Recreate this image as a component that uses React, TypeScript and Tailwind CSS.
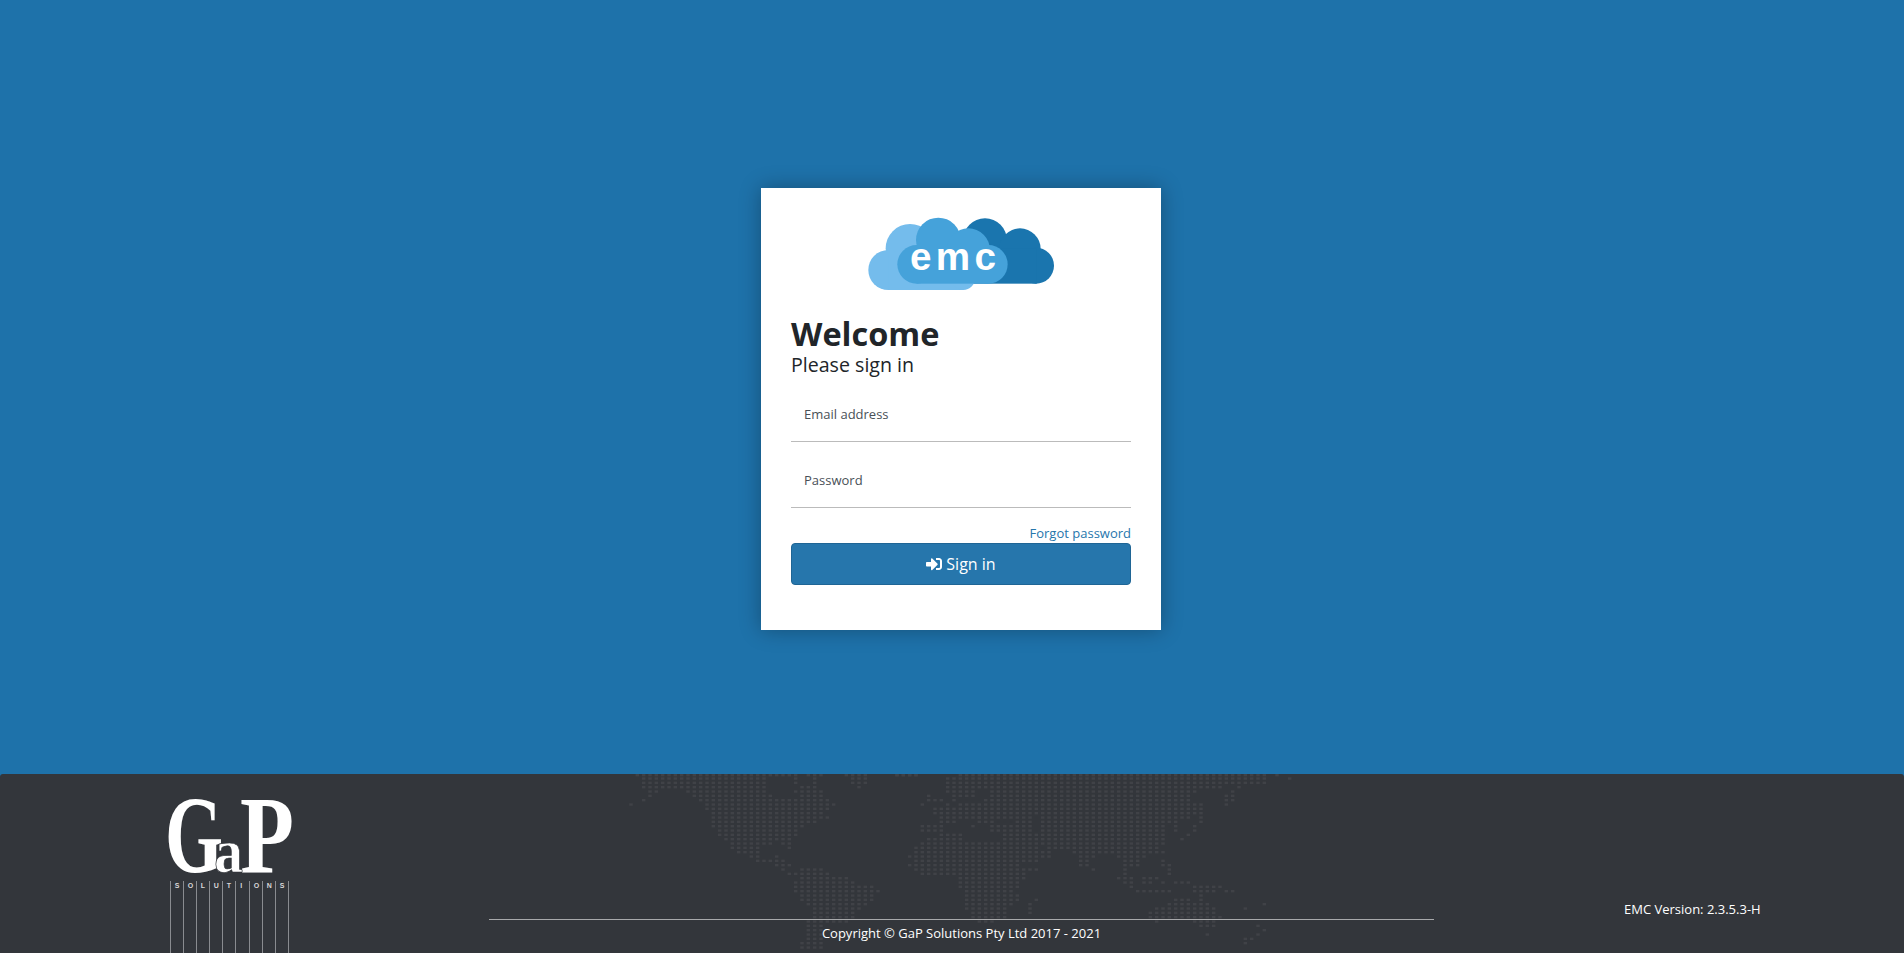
import React from "react";
import { FaSignInAlt } from "react-icons/fa";

type Row = [number, ...number[][]];
const left: Row[] = [
  [12,[50,470],[490,520],[570,610],[685,745],[840,880]],
  [25,[65,440],[530,530],[590,590],[700,730]],
  [38,[65,440],[530,530],[590,590],[700,730]],
  [51,[65,440],[545,575],[725,725]],
  [64,[90,110],[200,440],[530,610]],
  [77,[90,90],[220,460],[545,610]],
  [90,[70,70],[240,500],[530,630]],
  [103,[30,30],[260,500],[530,650]],
  [116,[260,630]],
  [129,[280,595]],
  [142,[280,630]],
  [155,[280,575]],
  [168,[280,555]],
  [181,[295,535]],
  [194,[295,535]],
  [207,[315,515]],
  [220,[335,460],[490,515]],
  [233,[335,335],[355,420],[510,510]],
  [246,[355,420]],
  [259,[395,420],[470,470]],
  [272,[415,480]],
  [285,[470,500]],
  [298,[495,495],[545,610]],
  [311,[510,630]],
  [324,[545,670]],
  [337,[530,690]],
  [350,[530,750]],
  [363,[530,765]],
  [376,[550,750]],
  [389,[550,750]],
  [402,[570,730]],
  [415,[585,710]],
  [428,[585,690]],
  [441,[585,690]],
  [454,[565,670]],
  [467,[565,600]],
  [480,[565,600]],
  [493,[565,600]],
  [506,[565,600]],
  [519,[550,595]],
  [532,[550,595]],
];
const right: Row[] = [
  [12,[0,45],[190,235],[265,315],[340,1100],[1135,1135]],
  [25,[150,215],[245,1095],[1160,1175]],
  [38,[150,215],[245,1085]],
  [51,[150,215],[245,965],[1020,1020]],
  [64,[150,215],[285,890],[995,995]],
  [77,[90,90],[170,215],[285,870],[980,1005]],
  [90,[90,120],[170,170],[250,870],[980,1005]],
  [103,[75,75],[150,150],[190,910],[980,980]],
  [116,[110,910]],
  [129,[110,910]],
  [142,[130,230],[245,315],[340,390],[420,870],[905,905]],
  [155,[130,155],[230,280],[360,390],[420,830],[905,905]],
  [168,[75,120],[210,210],[285,390],[420,780],[830,830],[885,885]],
  [181,[75,120],[285,390],[420,780],[825,825],[885,885]],
  [194,[130,175],[320,400],[420,780],[865,865]],
  [207,[90,190],[320,400],[420,780],[845,845]],
  [220,[70,300],[320,400],[420,795]],
  [233,[50,300],[320,400],[450,775]],
  [246,[50,300],[320,450],[515,640],[650,785]],
  [259,[35,335],[360,450],[535,580],[650,730]],
  [272,[50,335],[360,410],[535,560],[670,715],[785,785]],
  [285,[35,350],[535,560],[670,715],[785,810]],
  [298,[50,410],[575,575],[670,670],[805,805]],
  [311,[70,370],[670,670],[805,805]],
  [324,[185,370],[650,690],[730,770]],
  [337,[185,350],[670,690],[730,750],[785,785],[825,865]],
  [350,[185,350],[690,690],[880,965]],
  [363,[205,330],[710,810],[880,945],[980,1005]],
  [376,[205,350],[905,905]],
  [389,[205,350],[405,405],[825,870],[905,905]],
  [402,[205,330],[385,385],[805,925],[1095,1095]],
  [415,[205,310],[385,385],[765,945],[1040,1040]],
  [428,[225,310],[385,385],[745,945]],
  [441,[225,310],[745,965]],
  [454,[245,275],[765,765],[880,945]],
  [467,[900,945],[1075,1075]],
  [480,[1095,1095]],
  [493,[925,925],[1075,1075]],
  [506,[1040,1060]],
  [519,[1040,1040]],
];

const PITCH = 19 / 3;
const BASE = 650;

function dots(rows: Row[], off: number) {
  const out: React.ReactElement[] = [];
  rows.forEach((r) => {
    const zy = r[0] as number;
    const y = Math.max(0, (zy - 12) / 3 - 1);
    (r.slice(1) as number[][]).forEach(([a, b]) => {
      const k0 = Math.round((off + a / 3 - BASE) / PITCH);
      const k1 = Math.round((off + b / 3 - BASE) / PITCH);
      for (let k = k0; k <= k1; k++) {
        out.push(<rect key={`${off}-${zy}-${k}`} x={BASE + k * PITCH - 1.75} y={y} width={3.5} height={2.4} />);
      }
    });
  });
  return out;
}

function WorldMap() {
  return (
    <svg className="absolute left-0 top-0 pointer-events-none" width="1904" height="179" fill="#404247">
      {dots(left, 620)}
      {dots(right, 900)}
    </svg>
  );
}

function CloudLogo() {
  return (
    <svg width="200" height="80" viewBox="0 0 600 240" className="block">
      <g fill="#1a75ae">
        <circle cx="375" cy="76" r="66" />
        <circle cx="480" cy="102" r="62" />
        <circle cx="528" cy="152" r="54" />
        <rect x="300" y="100" width="230" height="106" />
      </g>
      <g fill="#74bcec">
        <circle cx="150" cy="100" r="73" />
        <circle cx="85" cy="165" r="60" />
        <rect x="85" y="120" width="225" height="105" />
        <circle cx="310" cy="190" r="35" />
      </g>
      <g fill="#45a2da">
        <circle cx="235" cy="75" r="67" />
        <circle cx="325" cy="105" r="65" />
        <circle cx="170" cy="148" r="58" />
        <circle cx="385" cy="148" r="58" />
        <rect x="170" y="90" width="215" height="116" />
      </g>
      <text x="150" y="165" fill="#fff" fontFamily="'Liberation Sans', sans-serif" fontWeight="700" fontSize="116" textLength="258" lengthAdjust="spacing">emc</text>
    </svg>
  );
}

function GapLogo() {
  const lines = [170.5, 183.5, 196.5, 209.5, 222.5, 235.5, 249.5, 262.5, 275.5, 288.5];
  const xs = lines.slice(0, 9).map((x, i) => (x + lines[i + 1]) / 2 - 2.2).join(" ");
  return (
    <svg width="140" height="179" viewBox="160 774 140 179" className="block">
      <text x="165" y="872" fill="#fff" fontFamily="'Liberation Serif', serif" fontWeight="700" fontSize="110" textLength="58" lengthAdjust="spacingAndGlyphs">G</text>
      <text x="240" y="872" fill="#fff" fontFamily="'Liberation Serif', serif" fontWeight="700" fontSize="110" textLength="54" lengthAdjust="spacingAndGlyphs">P</text>
      <text x="214" y="872" fill="#fff" stroke="#33363b" strokeWidth="0.7" fontFamily="'Liberation Serif', serif" fontWeight="700" fontSize="62" textLength="29" lengthAdjust="spacingAndGlyphs">a</text>
      {lines.map((x) => (
        <line key={x} x1={x} x2={x} y1="881" y2="953" stroke="#8a8c90" strokeWidth="1" />
      ))}
      <text x={xs} y="888" fill="#d8d8d8" fontFamily="'Liberation Sans', sans-serif" fontWeight="700" fontSize="7">SOLUTIONS</text>
    </svg>
  );
}

export default function App() {
  return (
    <div className="h-[953px] overflow-hidden bg-[#1e72aa] flex flex-col font-['Open_Sans',sans-serif]">
      <main className="h-[774px] shrink-0 flex justify-center items-start pt-[188px] pl-[18px]">
        <section className="w-[400px] h-[442px] bg-white px-[30px] pt-[30px] shadow-[0_0_20px_rgba(0,0,0,0.3)]">
          <div className="flex justify-center h-[72px] overflow-visible">
            <div className="-mt-[3px] -ml-[3px]"><CloudLogo /></div>
          </div>
          <h1 className="mt-[25px] text-[32.5px] leading-[38px] font-bold text-[#212529]">Welcome</h1>
          <p className="text-[19.6px] leading-[24px] text-[#212529]">Please sign in</p>
          <form className="mt-[12px]">
            <input placeholder="Email address" className="block w-full h-[53px] pl-[13px] pb-[3px] border-b border-[#bbbbbb] text-[13px] outline-none placeholder:text-[#495057] placeholder:opacity-100" />
            <input placeholder="Password" className="block w-full h-[53px] mt-[13px] pl-[13px] pb-[3px] border-b border-[#bbbbbb] text-[13px] outline-none placeholder:text-[#495057] placeholder:opacity-100" />
            <div className="mt-[16px] h-[19px] text-right text-[13px] leading-[18px] text-[#2676ac]">Forgot password</div>
            <button type="button" className="w-full h-[42px] flex items-center justify-center gap-[4px] bg-[#2676ac] border border-[#1f6595] rounded-[4px] text-white text-[16px]">
              <FaSignInAlt className="text-[16px]" />
              <span>Sign in</span>
            </button>
          </form>
        </section>
      </main>
      <footer className="relative flex-1 bg-[#33363b] rounded-t-[3px] overflow-hidden flex text-white text-[13px]">
        <WorldMap />
        <div className="relative ml-[160px] w-[140px]"><GapLogo /></div>
        <div className="relative ml-[189px] w-[945px] mt-[145px]">
          <div className="border-t border-[#a8a9ab] pt-[4px] text-center leading-[18px]">Copyright © GaP Solutions Pty Ltd 2017 - 2021</div>
        </div>
        <div className="relative ml-[190px] mt-[126px] leading-[18px] whitespace-nowrap">EMC Version: 2.3.5.3-H</div>
      </footer>
    </div>
  );
}
